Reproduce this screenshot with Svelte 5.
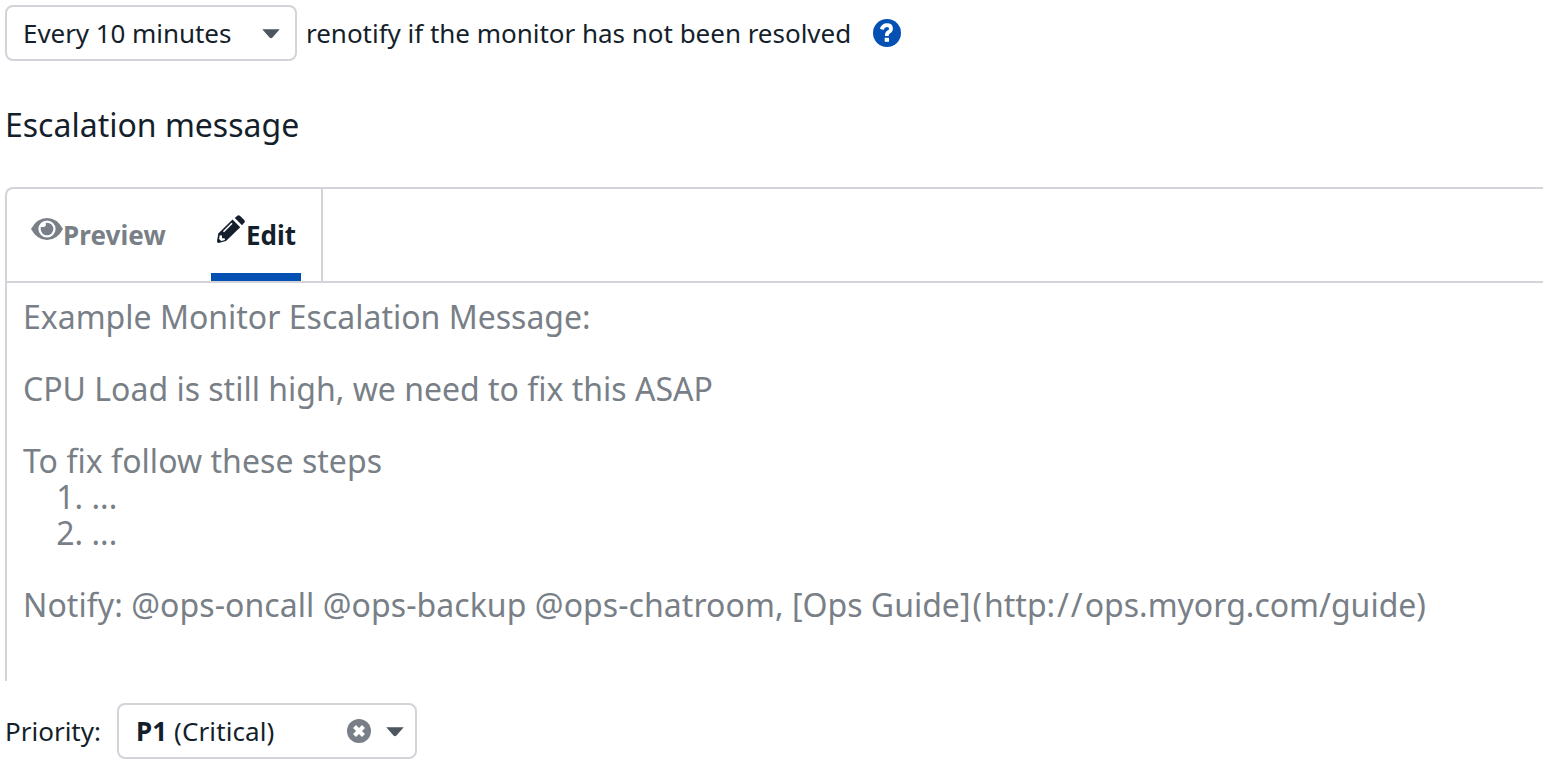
<script>
  const opening = `Example Monitor Escalation Message:

CPU Load is still high, we need to fix this ASAP
`;
  const steps = "To fix follow these steps";
  const list = `    1. ...
    2. ...
`;
  const recipients = "Notify: @ops-oncall @ops-backup @ops-chatroom, ";
</script>

{#snippet caret()}
  <svg class="caret" width="18" height="10" viewBox="0 0 18 10"><path d="M.3 .3H17.7L10.5 8.5Q9 10 7.5 8.5Z" /></svg>
{/snippet}

<main>
  <div class="renotify">
    <div class="select interval">
      <span>Every 10 minutes</span>
      {@render caret()}
    </div>
    <span class="description">renotify if the monitor has not been resolved</span>
    <svg class="help" width="28" height="28" viewBox="0 0 28 28">
      <circle cx="14" cy="14" r="14" fill="#0550b3" />
      <path d="M8.7 10.4Q10 6.2 14 6.2Q18 6.2 18 9.7Q18 11.8 15.7 13Q13.8 14 13.8 17" fill="none" stroke="#fff" stroke-width="3.8" />
      <rect x="11.7" y="18.8" width="4.3" height="4" fill="#fff" />
    </svg>
  </div>
  <h2>Escalation message</h2>
  <section class="editor">
    <header>
      <div class="tabs">
        <div class="tab preview">
          <svg width="32" height="22" viewBox="0 0 32 22"><path d="M0 11Q6 0 16 0T32 11Q26 22 16 22T0 11Z" fill="#797f87" /><circle cx="16" cy="11" r="8.6" fill="#fff" /><circle cx="16" cy="11" r="6.3" fill="#797f87" /><path d="M14.8 4V7Q14.8 9 12.6 9H9.2A7 7 0 0 1 14.8 4Z" fill="#fff" /></svg>
          <span>Preview</span>
        </div>
        <div class="tab edit">
          <svg width="28" height="28" viewBox="0 0 28 28">
            <path d="M0 26L1.3 18.5L15.5 4.5L23.2 12.2L9 26L1.5 28Q0 28 0 26Z" fill="#151f2c" />
            <path d="M17.8 3L20.3.7Q21.5-.4 22.9.8L27.2 5Q28.5 6.5 27.2 7.8L25 10.2Z" fill="#151f2c" />
            <path d="M6.5 16.7L15 8.2" stroke="#fff" stroke-width="1.6" />
            <path d="M2.7 20.2L5 20.5V23.2H7.6L8 25L4.2 25.9L2.1 24Z" fill="#fff" />
          </svg>
          <span>Edit</span>
        </div>
      </div>
    </header>
    <div class="message">{opening}<br /><span class="steps">{steps}</span><br />{list}<br /><span class="recipients">{recipients}</span>[Ops Guide<span class="brackets">](</span>http<span class="slashes">://</span>ops.myorg.com/guide)</div>
  </section>
  <div class="priority">
    <span class="label">Priority:</span>
    <div class="select level">
      <span class="value"><b>P1</b> (Critical)</span>
      <svg width="24" height="24" viewBox="0 0 24 24"><circle cx="12" cy="12" r="12" fill="#797f87" /><path d="M7.5 7.5L16.5 16.5M16.5 7.5L7.5 16.5" stroke="#fff" stroke-width="4.2" /></svg>
      {@render caret()}
    </div>
  </div>
</main>

<style>
  :global(body) { margin: 0; background: #fff; }
  main { box-sizing: border-box; width: 1543px; height: 764px; padding: 5px 0 0 5px; font-family: "Noto Sans", sans-serif; font-size: 26px; color: #151f2c; overflow: hidden; }
  svg { display: block; flex: none; }
  .renotify, .priority { display: flex; align-items: center; height: 56px; white-space: nowrap; }
  .select { box-sizing: border-box; display: flex; align-items: center; height: 56px; border: 2px solid #d3d3da; border-radius: 8px; }
  .interval { width: 292px; padding: 0 15px 0 16px; justify-content: space-between; letter-spacing: -.06px; }
  .caret { margin-top: 2px; fill: #4d555e; }
  .description { margin-left: 9px; width: 545px; letter-spacing: -.02px; }
  .help { margin-left: 22px; }
  h2 { margin: 39px 0 0; font-size: 32px; line-height: 50px; font-weight: 400; }
  .editor { box-sizing: border-box; height: 494px; margin-top: 37px; border: solid #d3d3da; border-width: 2px 0 0 2px; border-radius: 8px 0 0 0; }
  header { display: flex; height: 92px; border-bottom: 2px solid #d3d3da; }
  .tabs { box-sizing: border-box; display: flex; width: 316px; padding-left: 24px; border-right: 2px solid #d3d3da; font-weight: 700; }
  .tab { box-sizing: border-box; display: flex; height: 92px; padding-top: 26px; line-height: 40px; }
  .preview { width: 180px; color: #797f87; letter-spacing: .1px; }
  .preview svg { margin-top: 3px; }
  .edit { width: 90px; padding-left: 6px; border-bottom: 8px solid #0550b3; }
  .edit span { margin-left: 1px; }
  .message { padding: 16px 0 0 16px; color: #797f87; font-size: 32px; line-height: 36px; white-space: pre; }
  .steps { letter-spacing: .05px; }
  .recipients { letter-spacing: .065px; }
  .brackets { letter-spacing: 2px; }
  .slashes { letter-spacing: 1.9px; }
  .priority { margin-top: 22px; }
  .label { width: 96px; }
  .level { width: 300px; margin-left: 16px; padding: 0 11px 0 17px; }
  .value { flex: 1; letter-spacing: .1px; }
  .level .caret { margin-left: 15px; }
</style>
